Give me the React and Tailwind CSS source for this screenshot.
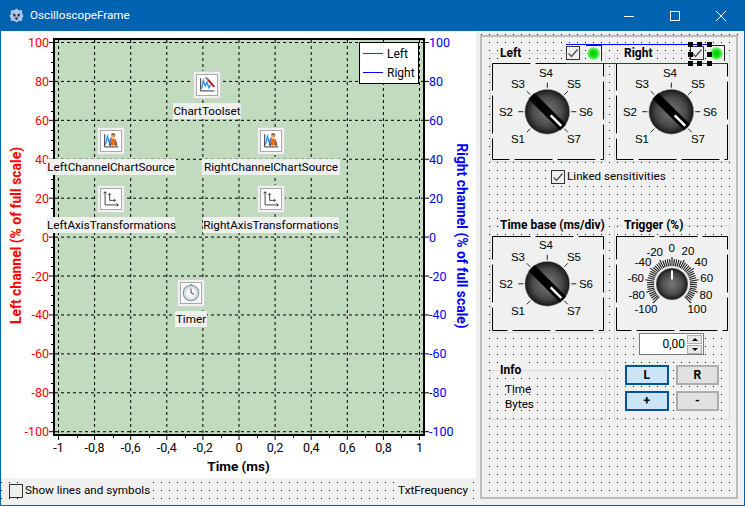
import React from "react";

const xs = Array.from({ length: 11 }, (_, i) => 58.5 + i * 36.1);
const ys = Array.from({ length: 11 }, (_, i) => 42.5 + i * 38.92);
const xLabels = ["-1", "-0,8", "-0,6", "-0,4", "-0,2", "0", "0,2", "0,4", "0,6", "0,8", "1"];
const yLabels = ["100", "80", "60", "40", "20", "0", "-20", "-40", "-60", "-80", "-100"];

function Chart() {
  const leftMinor = [];
  for (let i = 0; i < 10; i++) for (let j = 1; j < 4; j++) leftMinor.push(ys[i] + (j * 38.92) / 4);
  const bottomMinor = [];
  for (let i = 0; i < 10; i++) bottomMinor.push(xs[i] + 18.05);
  return (
    <svg className="absolute inset-0 block" width="475" height="447" viewBox="1 31 475 447">
      <rect x="54" y="39" width="370" height="396" fill="#c1dbbf" stroke="#000" strokeWidth="2" />
      {xs.map((x) => (
        <line key={x} x1={x} x2={x} y1="40" y2="434" stroke="#000" strokeDasharray="3 3" />
      ))}
      {ys.map((y) => (
        <line key={y} x1="55" x2="423" y1={y} y2={y} stroke="#000" strokeDasharray="3 3" />
      ))}
      {ys.map((y) => (
        <line key={y} x1="49" x2="54" y1={y} y2={y} stroke="#000" />
      ))}
      {leftMinor.map((y) => (
        <line key={y} x1="51" x2="54" y1={Math.round(y) + 0.5} y2={Math.round(y) + 0.5} stroke="#000" />
      ))}
      {ys.map((y) => (
        <line key={y} x1="424" x2="429" y1={y} y2={y} stroke="#000" />
      ))}
      {xs.map((x) => (
        <line key={x} x1={x} x2={x} y1="435" y2="440" stroke="#000" />
      ))}
      {bottomMinor.map((x) => (
        <line key={x} x1={Math.round(x) + 0.5} x2={Math.round(x) + 0.5} y1="435" y2="438" stroke="#000" />
      ))}
      <rect x="359.5" y="42.5" width="59" height="41" fill="#fff" stroke="#000" />
      <line x1="363" x2="383" y1="53.5" y2="53.5" stroke="#e00000" />
      <line x1="363" x2="383" y1="72.5" y2="72.5" stroke="#0000ff" />
      <text x="387" y="58" fontSize="12" fill="#000">Left</text>
      <text x="387" y="77" fontSize="12" fill="#000">Right</text>
      {yLabels.map((t, i) => (
        <text key={t} x="49" y={ys[i] + 4.5} textAnchor="end" fontSize="12.5" fill="#ff0000">{t}</text>
      ))}
      {yLabels.map((t, i) => (
        <text key={t} x="429" y={ys[i] + 4.5} fontSize="12.5" fill="#0000ff">{t}</text>
      ))}
      {xLabels.map((t, i) => (
        <text key={t} x={xs[i]} y="452" textAnchor="middle" fontSize="12.5" fill="#000">{t}</text>
      ))}
      <text x="238.5" y="471" textAnchor="middle" fontSize="13.5" fontWeight="700" fill="#000">Time (ms)</text>
      <text transform="translate(20.5 235.5) rotate(-90)" textAnchor="middle" fontSize="13.9" fontWeight="700" fill="#ff0000">Left channel (% of full scale)</text>
      <text transform="translate(456.5 236) rotate(90)" textAnchor="middle" fontSize="13.9" fontWeight="700" fill="#0000ff">Right channel (% of full scale)</text>
    </svg>
  );
}

const Wave = () => (
  <>
    <path d="M4 3.5V17.5H19" fill="none" stroke="#222" strokeWidth="1" />
    <path d="M5 15L7 6L9 12L11 8L13 14L15 11" fill="none" stroke="#3b8ee8" strokeWidth="1.6" />
  </>
);

function IconTool() {
  return (
    <svg width="22" height="22" viewBox="0 0 22 22">
      <Wave />
      <path d="M11 4L19 13" stroke="#b01818" strokeWidth="2.2" />
      <path d="M9.5 2.5L12.5 5.5" stroke="#888" strokeWidth="2.2" />
    </svg>
  );
}

function IconSource() {
  return (
    <svg width="22" height="22" viewBox="0 0 22 22">
      <Wave />
      <circle cx="13.5" cy="5" r="2.4" fill="#d8a078" />
      <path d="M11.2 4.4C11.4 2 15.6 2 15.8 4.4Z" fill="#8a5a38" />
      <path d="M10 16L10.5 9.5Q13.5 7 16.5 9.5L17 16Z" fill="#f06a10" />
      <path d="M8.5 16L10 10L11 16Z" fill="#28476e" />
      <path d="M16 16L16.5 10L18 16Z" fill="#28476e" />
    </svg>
  );
}

function IconAxes() {
  return (
    <svg width="22" height="22" viewBox="0 0 22 22" fill="none" stroke="#333" strokeWidth="1">
      <path d="M4.5 3V17.5H19" />
      <path d="M2.8 5L4.5 3L6.2 5M17 15.8L19 17.5L17 19.2" />
      <path d="M9.5 5V12.5H16" />
      <path d="M8 6.5L9.5 5L11 6.5M14.5 11L16 12.5L14.5 14" />
    </svg>
  );
}

function IconTimer() {
  return (
    <svg width="22" height="22" viewBox="0 0 22 22">
      <circle cx="11" cy="11" r="8.5" fill="#e8eef4" stroke="#8a97a5" strokeWidth="1.4" />
      <circle cx="11" cy="11" r="6" fill="#fff" stroke="#c5ccd4" />
      <path d="M11 6V11L14.5 12.5" fill="none" stroke="#333" strokeWidth="1" />
      <rect x="10" y="1" width="2" height="2" fill="#8a97a5" />
    </svg>
  );
}

function Tile({ children }) {
  return (
    <div className="w-7 h-7 shrink-0 bg-[#f0f0f0] border border-[#d4d4d4] p-[2px]">
      <div className="w-full h-full bg-white border border-[#a8a8a8] flex items-center justify-center overflow-hidden">
        {children}
      </div>
    </div>
  );
}

function Label({ children, className = "" }) {
  return <div className={`bg-[#f0f0f0] h-4 leading-4 whitespace-nowrap text-center text-black self-stretch ${className}`}>{children}</div>;
}

function Tray() {
  return (
    <>
      <div className="absolute left-[172px] top-[40px] w-[68px] flex flex-col items-center gap-[4px]">
        <Tile><IconTool /></Tile>
        <Label>ChartToolset</Label>
      </div>
      <div className="absolute left-[45px] top-[96px] w-[130px] flex flex-col items-center gap-[4px]">
        <Tile><IconSource /></Tile>
        <Label>LeftChannelChartSource</Label>
      </div>
      <div className="absolute left-[201px] top-[96px] w-[138px] flex flex-col items-center gap-[4px]">
        <Tile><IconSource /></Tile>
        <Label>RightChannelChartSource</Label>
      </div>
      <div className="absolute left-[46px] top-[154px] w-[128px] flex flex-col items-center gap-[4px]">
        <Tile><IconAxes /></Tile>
        <Label>LeftAxisTransformations</Label>
      </div>
      <div className="absolute left-[202px] top-[154px] w-[136px] flex flex-col items-center gap-[4px]">
        <Tile><IconAxes /></Tile>
        <Label>RightAxisTransformations</Label>
      </div>
      <div className="absolute left-[170px] top-[248px] w-[40px] flex flex-col items-center gap-[4px]">
        <Tile><IconTimer /></Tile>
        <Label className="mx-1">Timer</Label>
      </div>
    </>
  );
}

function Frame({ w, h }) {
  return (
    <>
      <rect x="0.5" y="0.5" width={w - 1} height={h - 1} fill="#f0f0f0" stroke="#fff" />
      <rect x="0.5" y="0.5" width={w - 1} height={h - 1} fill="none" stroke="#000" strokeDasharray="38 5" />
    </>
  );
}

function KnobGradient({ id }) {
  return (
    <defs>
      <radialGradient id={id} cx="50%" cy="50%" r="50%">
        <stop offset="0%" stopColor="#7a7a7a" />
        <stop offset="65%" stopColor="#4a4a4a" />
        <stop offset="100%" stopColor="#161616" />
      </radialGradient>
    </defs>
  );
}

function SelectorKnob({ id, h, cy }) {
  const cx = 55.3;
  const labels = [
    ["S4", 54, cy - 39], ["S3", 26, cy - 27.5], ["S5", 82, cy - 27.5],
    ["S2", 14, cy], ["S6", 94, cy], ["S1", 26, cy + 27], ["S7", 82, cy + 27],
  ];
  const angles = [-135, -90, -45, 0, 45, 90, 135];
  return (
    <svg width="112" height={h} viewBox={`0 0 112 ${h}`} className="block ml-px">
      <KnobGradient id={id} />
      <Frame w={112} h={h} />
      {angles.map((a) => {
        const r = (a * Math.PI) / 180;
        return (
          <line key={a} x1={cx + Math.sin(r) * 24} y1={cy - Math.cos(r) * 24} x2={cx + Math.sin(r) * 29} y2={cy - Math.cos(r) * 29} stroke="#222" />
        );
      })}
      <circle cx={cx} cy={cy} r="22.5" fill={`url(#${id})`} stroke="#bdbdbd" strokeWidth="0.6" />
      <line x1={cx - 15.8} y1={cy - 15.8} x2={cx + 15.8} y2={cy + 15.8} stroke="#000" strokeWidth="8.5" />
      <line x1={cx + 3.4} y1={cy + 3.6} x2={cx + 14} y2={cy + 14.2} stroke="#fff" strokeWidth="2.4" />
      {labels.map(([t, x, y]) => (
        <text key={t} x={x} y={y + 4.2} textAnchor="middle" fontSize="11.5" fill="#000" className="font-['Liberation_Sans',sans-serif]">{t}</text>
      ))}
    </svg>
  );
}

function TriggerKnob() {
  const cx = 56;
  const cy = 48;
  const ticks = [];
  for (let i = 0; i <= 50; i++) {
    const a = ((-135 + i * 5.4) * Math.PI) / 180;
    const major = i % 5 === 0;
    ticks.push(
      <line key={i} x1={cx + Math.sin(a) * 18} y1={cy - Math.cos(a) * 18} x2={cx + Math.sin(a) * (major ? 27 : 25)} y2={cy - Math.cos(a) * (major ? 27 : 25)} stroke="#1a1a1a" strokeWidth="1.1" />
    );
  }
  const labels = [
    ["0", 55.7, 12], ["-20", 38.7, 16], ["20", 72, 15], ["-40", 27, 26], ["40", 85, 26],
    ["-60", 19.7, 42], ["60", 90.7, 42], ["-80", 20.7, 59], ["80", 90, 59], ["-100", 30, 73], ["100", 81, 73],
  ];
  return (
    <svg width="112" height="95" viewBox="0 0 112 95" className="block ml-px">
      <KnobGradient id="trig" />
      <Frame w={112} h={95} />
      {ticks}
      <circle cx={cx} cy={cy} r="16" fill="url(#trig)" stroke="#bdbdbd" strokeWidth="0.5" />
      <line x1={cx} y1={cy - 13.5} x2={cx} y2={cy - 4.5} stroke="#fff" strokeWidth="2" />
      {labels.map(([t, x, y]) => (
        <text key={t} x={x} y={y + 4.2} textAnchor="middle" fontSize="11.5" fill="#000" className="font-['Liberation_Sans',sans-serif]">{t}</text>
      ))}
    </svg>
  );
}

function Group({ title, className, children }) {
  return (
    <div className={`relative border border-[#dcdcdc] ${className}`}>
      <div className="absolute left-[8px] top-[-9px] h-4 leading-4 px-px bg-[#f0f0f0] text-[12px] font-bold whitespace-nowrap text-black">{title}</div>
      {children}
    </div>
  );
}

function Check({ checked, className = "" }) {
  return (
    <div className={`w-[14px] h-[14px] shrink-0 bg-[#f0f0f0] border border-[#333] flex items-center justify-center ${className}`}>
      {checked && (
        <svg width="12" height="12" viewBox="0 0 12 12">
          <path d="M1.5 6.5L4.5 9.5L10.5 2.5" fill="none" stroke="#555" strokeWidth="1.4" />
        </svg>
      )}
    </div>
  );
}

function Led({ className }) {
  return (
    <div className={`absolute w-[16px] h-[16px] border-t border-r border-[#222] bg-[#f4f4f4] flex items-center justify-center ${className}`}>
      <div className="w-[13px] h-[13px] rounded-full bg-[radial-gradient(circle,#00c800_0%,#10e010_35%,#90f090_68%,#f4f4f4_100%)]" />
    </div>
  );
}

function Handle({ className }) {
  return <div className={`absolute w-[5px] h-[5px] bg-black ${className}`} />;
}

function ToggleButton({ on, children }) {
  return (
    <div className={on
      ? "h-5 border-2 border-[#005499] bg-[#cce4f7] flex items-center justify-center text-[12px] font-bold text-black"
      : "h-5 border-2 border-[#adadad] bg-[#e1e1e1] flex items-center justify-center text-[12px] font-bold text-black"}>
      {children}
    </div>
  );
}

function Panel() {
  return (
    <div className="ml-1 mt-1 w-[258px] h-[464px] border-2 border-[#bcbcbc] pl-2 pt-4 shrink-0">
      <div className="relative flex gap-2">
        <Group title="Left" className="w-[116px] h-[109px] pt-[9px]">
          <SelectorKnob id="k1" h={97} cy={48.7} />
        </Group>
        <Group title="Right" className="w-[116px] h-[109px] pt-[9px]">
          <SelectorKnob id="k2" h={97} cy={48.7} />
        </Group>
        <div className="absolute left-[76px] top-[-9px] w-[142px] h-px bg-[#0000ff]" />
        <div className="absolute left-[76px] top-[10px] w-[162px] h-px bg-[#006400]" />
        <Check checked className="absolute left-[76px] top-[-7px]" />
        <Led className="left-[96px] top-[-8px]" />
        <Check checked className="absolute left-[200px] top-[-7px]" />
        <Led className="left-[219px] top-[-8px]" />
        <Handle className="left-[198px] top-[-11px]" />
        <Handle className="left-[207px] top-[-11px]" />
        <Handle className="left-[217px] top-[-11px]" />
        <Handle className="left-[198px] top-[-1px]" />
        <Handle className="left-[217px] top-[-1px]" />
        <Handle className="left-[198px] top-[8px]" />
        <Handle className="left-[207px] top-[8px]" />
        <Handle className="left-[217px] top-[8px]" />
      </div>
      <div className="mt-[8px] ml-[61px] flex items-center gap-[2px] h-[14px]">
        <Check checked />
        <span className="bg-[#f0f0f0] text-black whitespace-nowrap">Linked sensitivities</span>
      </div>
      <div className="mt-[41px] flex gap-2">
        <div className="w-[116px] h-[195px] flex flex-col justify-between">
          <Group title="Time base (ms/div)" className="h-[108px] pt-[10px]">
            <SelectorKnob id="k3" h={95} cy={47.8} />
          </Group>
          <Group title="Info" className="h-[50px] pl-[14px] pt-[11px]">
            <div className="h-[15px] leading-[15px] text-black">Time</div>
            <div className="h-[15px] leading-[15px] text-black">Bytes</div>
          </Group>
        </div>
        <Group title="Trigger (%)" className="w-[116px] h-[195px] pt-[10px]">
          <TriggerKnob />
          <div className="mt-[2px] ml-[24px] w-[65px] h-[22px] border border-[#7a7a7a] bg-white flex items-center justify-between pr-px">
            <span className="ml-auto mr-[2px] text-[12px] text-black">0,00</span>
            <div className="w-[15px] flex flex-col gap-px">
              <div className="h-[9px] bg-[#e6e6e6] border border-[#b0b0b0] flex items-center justify-center">
                <div className="w-0 h-0 border-x-[3px] border-x-transparent border-b-[3px] border-b-black" />
              </div>
              <div className="h-[9px] bg-[#e6e6e6] border border-[#b0b0b0] flex items-center justify-center">
                <div className="w-0 h-0 border-x-[3px] border-x-transparent border-t-[3px] border-t-black" />
              </div>
            </div>
          </div>
          <div className="mt-[10px] ml-[10px] w-[94px] grid grid-cols-2 gap-x-[7px] gap-y-[6px]">
            <ToggleButton on>L</ToggleButton>
            <ToggleButton>R</ToggleButton>
            <ToggleButton on>+</ToggleButton>
            <ToggleButton>-</ToggleButton>
          </div>
        </Group>
      </div>
    </div>
  );
}

function AppIcon() {
  return (
    <svg width="15" height="15" viewBox="0 0 16 16">
      <path d="M8 0.5L10.5 2.5L14 2.5L14 6L15.5 8.5L14 11L14 13.5L10.5 13.5L8 15.5L5.5 13.5L2 13.5L2 11L0.5 8.5L2 6L2 2.5L5.5 2.5Z" fill="#b4c6e6" />
      <path d="M4 5.5L7 7L7 9L5 9ZM12 5.5L9 7L9 9L11 9Z" fill="#1c2a48" />
      <path d="M6 11L8 9.5L10 11L8 13Z" fill="#2a3a60" />
    </svg>
  );
}

export default function App() {
  return (
    <div className="w-[745px] h-[506px] flex flex-col overflow-hidden font-['Roboto',sans-serif] text-[11.7px]">
      <div className="h-[31px] shrink-0 bg-[#0063b1] flex items-center pl-[9px] text-white">
        <AppIcon />
        <span className="ml-[6px] whitespace-nowrap">OscilloscopeFrame</span>
        <div className="ml-auto mr-px flex">
          <div className="w-[46px] h-[31px] flex items-center justify-center">
            <svg width="10" height="10" viewBox="0 0 10 10"><path d="M0 5.5H10" stroke="#fff" /></svg>
          </div>
          <div className="w-[46px] h-[31px] flex items-center justify-center">
            <svg width="10" height="10" viewBox="0 0 10 10"><rect x="0.5" y="0.5" width="9" height="9" fill="none" stroke="#fff" /></svg>
          </div>
          <div className="w-[46px] h-[31px] flex items-center justify-center">
            <svg width="10" height="10" viewBox="0 0 10 10"><path d="M0 0L10 10M10 0L0 10" stroke="#fff" /></svg>
          </div>
        </div>
      </div>
      <div className="flex-1 flex border-x border-b border-[#0063b1] bg-[#f0f0f0] bg-[image:conic-gradient(from_270deg_at_1px_1px,#000_25%,transparent_0)] bg-[size:8px_8px] bg-[position:0_3px]">
        <div className="w-[475px] shrink-0 flex flex-col">
          <div className="relative h-[447px] bg-white overflow-hidden">
            <Chart />
            <Tray />
          </div>
          <div className="h-[26px] flex items-center justify-between pl-2 pr-2 text-black">
            <div className="flex items-center gap-[2px]">
              <Check />
              <span className="bg-[#f0f0f0] whitespace-nowrap">Show lines and symbols</span>
            </div>
            <span className="bg-[#f0f0f0] whitespace-nowrap">TxtFrequency</span>
          </div>
        </div>
        <Panel />
      </div>
    </div>
  );
}
